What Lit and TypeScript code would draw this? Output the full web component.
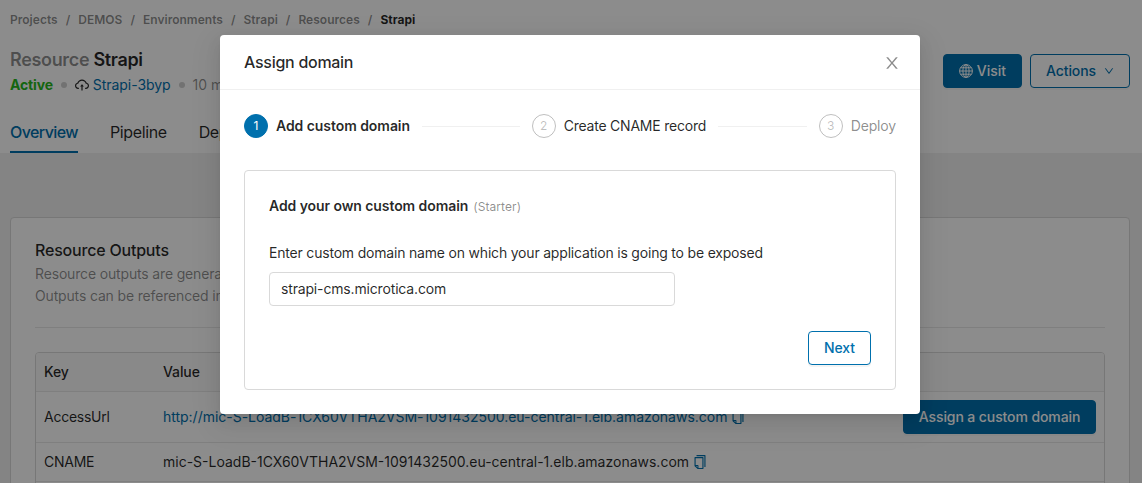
import { LitElement, html, css } from "lit";
import { customElement, state, property } from "lit/decorators.js";

const ICONS: Record<string, string[]> = {
  close: [
    "M563.8 512l262.5-312.9c4.4-5.2.7-13.1-6.1-13.1h-79.8c-4.7 0-9.2 2.1-12.3 5.7L511.6 449.8 295.1 191.7c-3-3.6-7.5-5.7-12.3-5.7H203c-6.8 0-10.5 7.9-6.1 13.1L459.4 512 196.9 824.9A7.95 7.95 0 00203 838h79.8c4.7 0 9.2-2.1 12.3-5.7l216.5-258.1 216.5 258.1c3 3.6 7.5 5.7 12.3 5.7h79.8c6.8 0 10.5-7.9 6.1-13.1L563.8 512z",
  ],
  down: [
    "M884 256h-75c-5.1 0-9.9 2.5-12.9 6.6L512 654.2 227.9 262.6c-3-4.1-7.8-6.6-12.9-6.6h-75c-6.5 0-10.3 7.4-6.5 12.7l352.6 486.1c12.8 17.6 39 17.6 51.7 0l352.6-486.1c3.9-5.3.1-12.7-6.4-12.7z",
  ],
  copy: [
    "M832 64H296c-4.4 0-8 3.6-8 8v56c0 4.4 3.6 8 8 8h496v688c0 4.4 3.6 8 8 8h56c4.4 0 8-3.6 8-8V96c0-17.7-14.3-32-32-32zM704 192H192c-17.7 0-32 14.3-32 32v530.7c0 8.5 3.4 16.6 9.4 22.6l173.3 173.3c2.2 2.2 4.7 4 7.4 5.5v1.9h4.2c3.5 1.3 7.2 2 11 2H704c17.7 0 32-14.3 32-32V224c0-17.7-14.3-32-32-32zM350 856.2L263.9 770H350v86.2zM664 888H414V746c0-22.1-17.9-40-40-40H232V264h432v624z",
  ],
  cloud: [
    "M518.3 459a8 8 0 00-12.6 0l-112 141.7a7.98 7.98 0 006.3 12.9h73.9V856c0 4.4 3.6 8 8 8h60c4.4 0 8-3.6 8-8V613.7H624c6.7 0 10.4-7.7 6.3-12.9L518.3 459z",
    "M811.4 366.7C765.6 245.9 648.9 160 512.2 160S258.8 245.8 213 366.6C127.3 389.1 64 467.2 64 560c0 110.5 89.5 200 199.9 200H304c4.4 0 8-3.6 8-8v-60c0-4.4-3.6-8-8-8h-40.1c-33.7 0-65.4-13.4-89-37.7-23.5-24.2-36-56.8-34.9-90.6.9-26.4 9.9-51.2 26.2-72.1 16.7-21.3 40.1-36.8 66.1-43.7l37.9-9.9 13.9-36.6c8.6-22.8 20.6-44.1 35.7-63.4a245.6 245.6 0 0152.4-49.9c41.1-28.9 89.5-44.2 140-44.2s98.9 15.3 140 44.2c19.9 14 37.5 30.8 52.4 49.9 15.1 19.3 27.1 40.7 35.7 63.4l13.8 36.5 37.8 10C846.1 454.5 884 503.8 884 560c0 33.1-12.9 64.3-36.3 87.7a123.07 123.07 0 01-87.6 36.3H720c-4.4 0-8 3.6-8 8v60c0 4.4 3.6 8 8 8h40.1C870.5 760 960 670.5 960 560c0-92.7-63.1-170.7-148.6-193.3z",
  ],
};

@customElement("ui-icon")
class UiIcon extends LitElement {
  @property() name = "";
  static styles = css`
    :host { display: inline-flex; width: 1em; height: 1em; flex: none; }
    svg { width: 100%; height: 100%; display: block; fill: currentColor; }
    .line { fill: none; stroke: currentColor; stroke-width: 1; }
  `;
  render() {
    if (this.name === "globe") {
      return html`<svg class="line" viewBox="0 0 14 14">
        <circle cx="7" cy="7" r="6.4" />
        <ellipse cx="7" cy="7" rx="3.1" ry="6.4" />
        <path d="M7 .6v12.8M.6 7h12.8M1.6 3.8h10.8M1.6 10.2h10.8" />
      </svg>`;
    }
    return html`<svg viewBox="64 64 896 896">
      ${(ICONS[this.name] || []).map((d) => {
        const p = document.createElementNS("http://www.w3.org/2000/svg", "path");
        p.setAttribute("d", d);
        return p;
      })}
    </svg>`;
  }
}

@customElement("domain-dialog")
class DomainDialog extends LitElement {
  @state() domain = "strapi-cms.microtica.com";
  static styles = css`
    :host { display: block; width: 700px; height: 379px; background: #fff; border-radius: 4px;
      box-shadow: 0 3px 6px -4px rgba(0,0,0,.12), 0 6px 16px 0 rgba(0,0,0,.08), 0 9px 28px 8px rgba(0,0,0,.05);
      color: rgba(0,0,0,.85); }
    * { box-sizing: border-box; }
    .head { height: 55px; display: flex; align-items: center; justify-content: space-between;
      padding: 0 20px 0 24px; border-bottom: 1px solid #f0f0f0; font-size: 16px; font-weight: 500; }
    .title { font-size: 16px; font-weight: 500; letter-spacing: -.28px; }
    .close { color: rgba(0,0,0,.45); font-size: 16px; margin-top: 2px; }
    .body { padding: 24px; }
    .steps { display: flex; align-items: center; height: 24px; }
    .step { display: flex; align-items: center; gap: 8px; }
    .num { width: 24px; height: 24px; border-radius: 50%; border: 1px solid rgba(0,0,0,.25);
      color: rgba(0,0,0,.25); font-size: 12px; display: flex; align-items: center; justify-content: center; }
    .on .num { background: #0070ad; border-color: #0070ad; color: #fff; }
    .label { letter-spacing: -.22px; }
    .on .label { font-weight: 600; letter-spacing: -.06px; }
    .off .label { color: rgba(0,0,0,.45); letter-spacing: -.16px; }
    .rule { flex: 98; height: 1px; background: #f0f0f0; margin: 0 12px; }
    .rule.second { flex: 89; }
    .panel { margin-top: 32px; height: 220px; border: 1px solid #d9d9d9; border-radius: 4px;
      padding: 24px; display: flex; flex-direction: column; }
    .line { line-height: 22px; }
    .lead { font-weight: 600; letter-spacing: -.08px; }
    .plan { font-size: 12px; color: rgba(0,0,0,.45); margin-left: 1px; letter-spacing: .08px; }
    .prompt { margin-top: 24px; letter-spacing: -.195px; }
    input { margin-top: 8px; width: 406px; height: 34px; border: 1px solid #d9d9d9; border-radius: 4px;
      padding: 0 11px 2px; font: inherit; color: inherit; letter-spacing: -.16px; outline: none; background: #fff; }
    button { align-self: flex-end; flex: none; margin-top: 25px; width: 63px; height: 34px; padding: 0; border: 1px solid #0070ad;
      border-radius: 4px; background: #fff; color: #0070ad; font: inherit; font-weight: 500; letter-spacing: -.1px;
      box-shadow: 0 2px 0 rgba(0,0,0,.045); }
  `;
  render() {
    return html`
      <div class="head"><span class="title">Assign domain</span><ui-icon class="close" name="close"></ui-icon></div>
      <div class="body">
        <div class="steps">
          <div class="step on"><span class="num">1</span><span class="label">Add custom domain</span></div>
          <span class="rule"></span>
          <div class="step"><span class="num">2</span><span class="label">Create CNAME record</span></div>
          <span class="rule second"></span>
          <div class="step off"><span class="num">3</span><span class="label">Deploy</span></div>
        </div>
        <div class="panel">
          <div class="line"><span class="lead">Add your own custom domain</span> <span class="plan">(Starter)</span></div>
          <div class="line prompt">Enter custom domain name on which your application is going to be exposed</div>
          <input .value=${this.domain} @input=${(e: InputEvent) => (this.domain = (e.target as HTMLInputElement).value)} />
          <button>Next</button>
        </div>
      </div>`;
  }
}

@customElement("app-root")
class AppRoot extends LitElement {
  static styles = css`
    :host { display: block; height: 483px; overflow: hidden; position: relative; background: #f0f0f0;
      font-family: Inter, "Liberation Sans", sans-serif; font-size: 14px; line-height: 22px; color: rgba(0,0,0,.85); }
    * { box-sizing: border-box; }
    .top { background: #fff; height: 153px; padding: 9px 12px 0 10px; }
    .crumbs { display: flex; gap: 8px; font-size: 12px; font-weight: 600; color: rgba(0,0,0,.45); height: 22px; letter-spacing: .02px; }
    .here { color: rgba(0,0,0,.85); font-weight: 700; }
    .main { display: flex; justify-content: space-between; margin-top: 18px; height: 46px; }
    .name { font-size: 18px; font-weight: 600; line-height: 22px; letter-spacing: -.34px; }
    .muted { color: rgba(0,0,0,.45); }
    .meta { display: flex; align-items: center; line-height: 22px; margin-top: 3px; white-space: nowrap; }
    .active { color: #27b81c; font-weight: 700; letter-spacing: -.16px; }
    .dot { width: 6px; height: 6px; border-radius: 50%; background: #d0d0d0; margin: 0 8px; }
    .link { color: #0070ad; }
    .meta .link { margin-left: 4px; letter-spacing: -.05px; }
    .buttons { display: flex; gap: 8px; padding-top: 5px; }
    .btn { height: 34px; display: inline-flex; align-items: center; justify-content: center; border: 1px solid #0070ad;
      border-radius: 4px; color: #0070ad; font-weight: 500; box-shadow: 0 2px 0 rgba(0,0,0,.03); }
    .fill { background: #0070ad; color: #fff; }
    .visit { width: 79px; gap: 4px; }
    .actions { width: 100px; gap: 8px; letter-spacing: -.08px; }
    .small { font-size: 10px; }
    .tabs { display: flex; gap: 32px; font-size: 16px; height: 58px; align-items: stretch; letter-spacing: -.38px; white-space: nowrap; }
    .tab { padding-top: 26px; line-height: 22px; }
    .cur { color: #0070ad; border-bottom: 2px solid #0070ad; font-weight: 500; letter-spacing: -.58px; }
    .card { margin: 64px 12px 0 10px; height: 400px; background: #fff; border: 1px solid #d9d9d9; border-radius: 4px; padding: 20px 24px; }
    .h { font-size: 16px; font-weight: 500; line-height: 25px; letter-spacing: -.2px; }
    .desc { color: rgba(0,0,0,.45); letter-spacing: -.16px; }
    .sep { height: 1px; background: #e8e8e8; margin: 20px 0 24px; }
    .table { border: 1px solid #d9d9d9; border-radius: 4px; overflow: hidden; }
    .row { display: grid; grid-template-columns: 119px 1fr auto; align-items: center; border-bottom: 1px solid #e8e8e8; padding: 0 8px; height: 39px; }
    .thead { background: #fafafa; font-weight: 500; letter-spacing: -.1px; }
    .tall { height: 51px; }
    .key { letter-spacing: -.25px; }
    .value { display: flex; align-items: center; gap: 4px; }
    .tall .value { letter-spacing: -.02px; }
    .assign { width: 193px; letter-spacing: -.1px; }
    .mask { position: absolute; inset: 0; background: rgba(0,0,0,.45); display: flex; justify-content: center; align-items: flex-start; padding: 35px 2px 0 0; }
  `;
  render() {
    const crumbs = ["Projects", "DEMOS", "Environments", "Strapi", "Resources"];
    const host = "mic-S-LoadB-1CX60VTHA2VSM-1091432500.eu-central-1.elb.amazonaws.com";
    return html`
      <div class="top">
        <div class="crumbs">${crumbs.map((c) => html`<span>${c}</span><span>/</span>`)}<span class="here">Strapi</span></div>
        <div class="main">
          <div>
            <div class="name"><span class="muted">Resource</span> Strapi</div>
            <div class="meta">
              <span class="active">Active</span><span class="dot"></span><ui-icon name="cloud"></ui-icon>
              <span class="link">Strapi-3byp</span><span class="dot"></span><span class="muted">10 mi</span>
            </div>
          </div>
          <div class="buttons">
            <span class="btn fill visit"><ui-icon name="globe"></ui-icon>Visit</span>
            <span class="btn actions">Actions<ui-icon class="small" name="down"></ui-icon></span>
          </div>
        </div>
        <div class="tabs"><span class="tab cur">Overview</span><span class="tab">Pipeline</span><span class="tab">Dep</span></div>
      </div>
      <div class="card">
        <div class="h">Resource Outputs</div>
        <div class="desc">Resource outputs are generated<br />Outputs can be referenced in</div>
        <div class="sep"></div>
        <div class="table">
          <div class="row thead"><span>Key</span><span>Value</span></div>
          <div class="row tall"><span class="key">AccessUrl</span><span class="value link">http://${host}<ui-icon name="copy"></ui-icon></span><span class="btn fill assign">Assign a custom domain</span></div>
          <div class="row"><span class="key">CNAME</span><span class="value">${host}<ui-icon class="link" name="copy"></ui-icon></span></div>
          <div class="row"></div>
        </div>
      </div>
      <div class="mask"><domain-dialog></domain-dialog></div>`;
  }
}
